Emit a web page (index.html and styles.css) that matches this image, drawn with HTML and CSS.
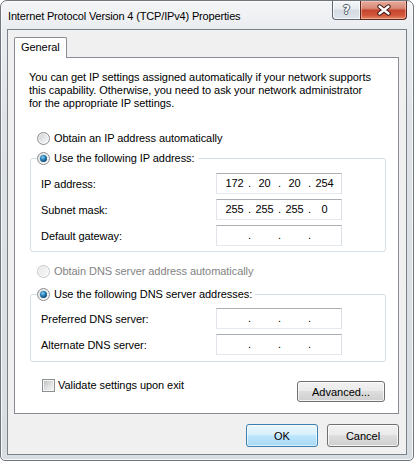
FILE: index.html
```html
<!DOCTYPE html>
<html>
<head>
<meta charset="utf-8">
<title>Internet Protocol Version 4 (TCP/IPv4) Properties</title>
<link rel="stylesheet" href="styles.css">
</head>
<body>
<div class="window">
  <div class="titlebar">
    <div class="title">Internet Protocol Version 4 (TCP/IPv4) Properties</div>
    <div class="caption-buttons">
      <div class="cbtn help"><span class="help-glyph">?</span></div>
      <div class="cbtn close">
        <svg width="16" height="12" viewBox="0 0 16 12" aria-hidden="true">
          <path d="M3.5 2.5 L12.5 9.5 M12.5 2.5 L3.5 9.5" stroke="#3b1a14" stroke-width="4.4" stroke-linecap="round" fill="none"/>
          <path d="M3.5 2.5 L12.5 9.5 M12.5 2.5 L3.5 9.5" stroke="#ffffff" stroke-width="2.4" stroke-linecap="round" fill="none"/>
        </svg>
      </div>
    </div>
  </div>
  <div class="client">
    <div class="tabs"><div class="tab">General</div></div>
    <div class="panel">
      <p class="desc">You can get IP settings assigned automatically if your network supports<br>this capability. Otherwise, you need to ask your network administrator<br>for the appropriate IP settings.</p>

      <div class="option ip-auto"><span class="radio"></span><span>Obtain an IP address automatically</span></div>

      <fieldset class="group ip-group">
        <legend><span class="radio checked"></span><span>Use the following IP address:</span></legend>
        <div class="field-row first">
          <span class="label">IP address:</span>
          <div class="ipbox"><span>172</span><i>.</i><span>20</span><i>.</i><span>20</span><i>.</i><span>254</span></div>
        </div>
        <div class="field-row">
          <span class="label">Subnet mask:</span>
          <div class="ipbox"><span>255</span><i>.</i><span>255</span><i>.</i><span>255</span><i>.</i><span>0</span></div>
        </div>
        <div class="field-row">
          <span class="label">Default gateway:</span>
          <div class="ipbox"><span></span><i>.</i><span></span><i>.</i><span></span><i>.</i><span></span></div>
        </div>
      </fieldset>

      <div class="option dns-auto disabled"><span class="radio"></span><span>Obtain DNS server address automatically</span></div>

      <fieldset class="group dns-group">
        <legend><span class="radio checked"></span><span>Use the following DNS server addresses:</span></legend>
        <div class="field-row first">
          <span class="label">Preferred DNS server:</span>
          <div class="ipbox"><span></span><i>.</i><span></span><i>.</i><span></span><i>.</i><span></span></div>
        </div>
        <div class="field-row">
          <span class="label">Alternate DNS server:</span>
          <div class="ipbox"><span></span><i>.</i><span></span><i>.</i><span></span><i>.</i><span></span></div>
        </div>
      </fieldset>

      <div class="bottom-row">
        <div class="check-row"><span class="checkbox"></span><span>Validate settings upon exit</span></div>
        <button class="btn advanced" type="button">Advanced...</button>
      </div>
    </div>
    <div class="dialog-buttons">
      <button class="btn default" type="button">OK</button>
      <button class="btn" type="button">Cancel</button>
    </div>
  </div>
</div>
</body>
</html>
```

FILE: styles.css
```css
* { box-sizing: border-box; }

html, body {
  margin: 0;
  padding: 0;
}

body {
  width: 414px;
  height: 461px;
  overflow: hidden;
  background: #ffffff;
  color: #000000;
  font-family: "Liberation Sans", Arial, sans-serif;
  font-size: 11px;
  letter-spacing: -0.06px;
}

.window {
  width: 414px;
  height: 461px;
  display: flex;
  flex-direction: column;
  padding: 0 6px 5px 6px;
  border: 1px solid #6f767d;
  border-radius: 7px 7px 5px 5px;
  background: linear-gradient(to bottom, #f4f5f7 0px, #eaedf0 28px, #dfe3e7 120px, #d8dde2 100%);
  box-shadow: inset 0 0 0 1px rgba(255, 255, 255, 0.75);
}

/* ---------- title bar ---------- */
.titlebar {
  height: 28px;
  flex: none;
  display: flex;
  justify-content: space-between;
  align-items: flex-start;
}

.title {
  margin-top: 7px;
  padding-left: 1px;
  line-height: 16px;
  font-size: 11px;
  letter-spacing: -0.16px;
  color: #000;
  white-space: nowrap;
}

.caption-buttons {
  display: flex;
  height: 19px;
}

.cbtn {
  height: 19px;
  display: flex;
  align-items: center;
  justify-content: center;
  border: 1px solid #5d6873;
  border-top: none;
}

.help {
  width: 28px;
  border-right: none;
  border-bottom-left-radius: 4px;
  background: linear-gradient(to bottom, #f4f6f8 0%, #e8ecf0 45%, #d3dae2 50%, #dfe5eb 100%);
  box-shadow: inset 0 0 0 1px rgba(255, 255, 255, 0.7);
}

.help-glyph {
  font-family: "DejaVu Sans", sans-serif;
  font-weight: bold;
  font-size: 12px;
  line-height: 12px;
  color: #ffffff;
  text-shadow: 1px 0 0 #4d5863, -1px 0 0 #4d5863, 0 1px 0 #4d5863, 0 -1px 0 #4d5863;
}

.close {
  width: 47px;
  border-color: #5a2620;
  border-bottom-right-radius: 4px;
  background: linear-gradient(to bottom, #e7ab9d 0%, #d98a78 40%, #c5452f 52%, #d2563c 80%, #e58a62 100%);
  box-shadow: inset 0 0 0 1px rgba(255, 220, 210, 0.45);
}

.close svg { display: block; }

/* ---------- client area ---------- */
.client {
  flex: 1;
  display: flex;
  flex-direction: column;
  padding: 7px 7px 7px 6px;
  border: 1px solid #7a8188;
  background: #f0f0f0;
}

.tabs {
  display: flex;
  height: 20px;
  flex: none;
}

.tab {
  position: relative;
  z-index: 1;
  width: 53px;
  height: 21px;
  padding-left: 6px;
  border: 1px solid #898c95;
  border-bottom: none;
  border-radius: 2px 2px 0 0;
  background: #ffffff;
  line-height: 18px;
}

.panel {
  flex: 1;
  display: flex;
  flex-direction: column;
  border: 1px solid #898c95;
  background: #ffffff;
}

.desc {
  margin: 13px 0 0 14px;
  line-height: 13px;
}

.option {
  display: flex;
  align-items: center;
  gap: 4px;
  margin-left: 22px;
  line-height: 15px;
}

.ip-auto { margin-top: 21px; }
.dns-auto { margin-top: 12px; }
.disabled { color: #838383; }

/* ---------- radio / checkbox ---------- */
.radio {
  position: relative;
  flex: none;
  width: 13px;
  height: 13px;
  border: 1px solid #8a8c8e;
  border-radius: 50%;
  background: linear-gradient(135deg, #c9cbcd 0%, #e6e7e8 50%, #fafafa 100%);
  box-shadow: inset 0 0 0 1px rgba(255, 255, 255, 0.6);
}

.disabled .radio {
  border-color: #c4c6c8;
  background: linear-gradient(135deg, #e3e4e5 0%, #f0f0f0 50%, #fbfbfb 100%);
}

.radio.checked::after {
  content: "";
  position: absolute;
  left: 2px;
  top: 2px;
  width: 7px;
  height: 7px;
  border-radius: 50%;
  background: radial-gradient(circle at 40% 35%, #8fd2f5 0%, #2d86bf 35%, #124c78 70%, #0a3453 100%);
}

.checkbox {
  flex: none;
  width: 13px;
  height: 13px;
  border: 1px solid #8e8f8f;
  background: linear-gradient(135deg, #b9bdc2 0%, #dfe1e3 55%, #f7f7f7 100%);
  box-shadow: inset 0 0 0 1px #f4f4f4;
}

/* ---------- group boxes ---------- */
.group {
  min-width: 0;
  margin: 0 12px 0 15px;
  padding: 0 0 5px 6px;
  border: 1px solid #d5dfe5;
  border-radius: 3px;
}

.ip-group { margin-top: 5px; }
.dns-group { margin-top: 8px; padding-bottom: 6px; }

.group legend {
  display: flex;
  align-items: center;
  gap: 4px;
  padding: 0 3px 0 0;
  line-height: 15px;
}

.field-row {
  display: flex;
  align-items: center;
  height: 21px;
  margin-top: 5px;
  padding-left: 4px;
}

.ip-group .field-row.first { margin-top: 7px; }
.dns-group .field-row.first { margin-top: 6px; }

.label {
  width: 175px;
  flex: none;
}

.ipbox {
  display: flex;
  width: 126px;
  height: 21px;
  padding-left: 4px;
  border: 1px solid;
  border-color: #abadb3 #dbdfe6 #e3e9ef #e2e3ea;
  background: #ffffff;
  line-height: 19px;
}

.ipbox span {
  width: 27px;
  text-align: center;
}

.ipbox i {
  width: 3px;
  font-style: normal;
  text-align: center;
}

/* ---------- bottom ---------- */
.bottom-row {
  display: flex;
  justify-content: space-between;
  align-items: flex-start;
  margin-top: 16px;
}

.check-row {
  display: flex;
  align-items: center;
  gap: 3px;
  margin-left: 27px;
  line-height: 15px;
}

.btn {
  padding: 0;
  font: inherit;
  color: #000;
  height: 23px;
  border: 1px solid #707070;
  border-radius: 3px;
  background: linear-gradient(to bottom, #f2f2f2 0%, #ebebeb 45%, #dddddd 50%, #cfcfcf 100%);
  box-shadow: inset 0 0 0 1px rgba(255, 255, 255, 0.75);
}

.btn.default {
  border-color: #3c7fb1;
  background: linear-gradient(to bottom, #eaf6fd 0%, #d9f0fc 45%, #bee6fd 50%, #a7d9f5 100%);
  box-shadow: inset 0 0 0 1px rgba(255, 255, 255, 0.6);
}

.advanced {
  width: 88px;
  height: 21px;
  margin: 3px 13px 0 0;
}

.dialog-buttons {
  flex: none;
  display: flex;
  justify-content: flex-end;
  gap: 9px;
  margin-top: 10px;
}

.dialog-buttons .btn {
  width: 72px;
}
```
